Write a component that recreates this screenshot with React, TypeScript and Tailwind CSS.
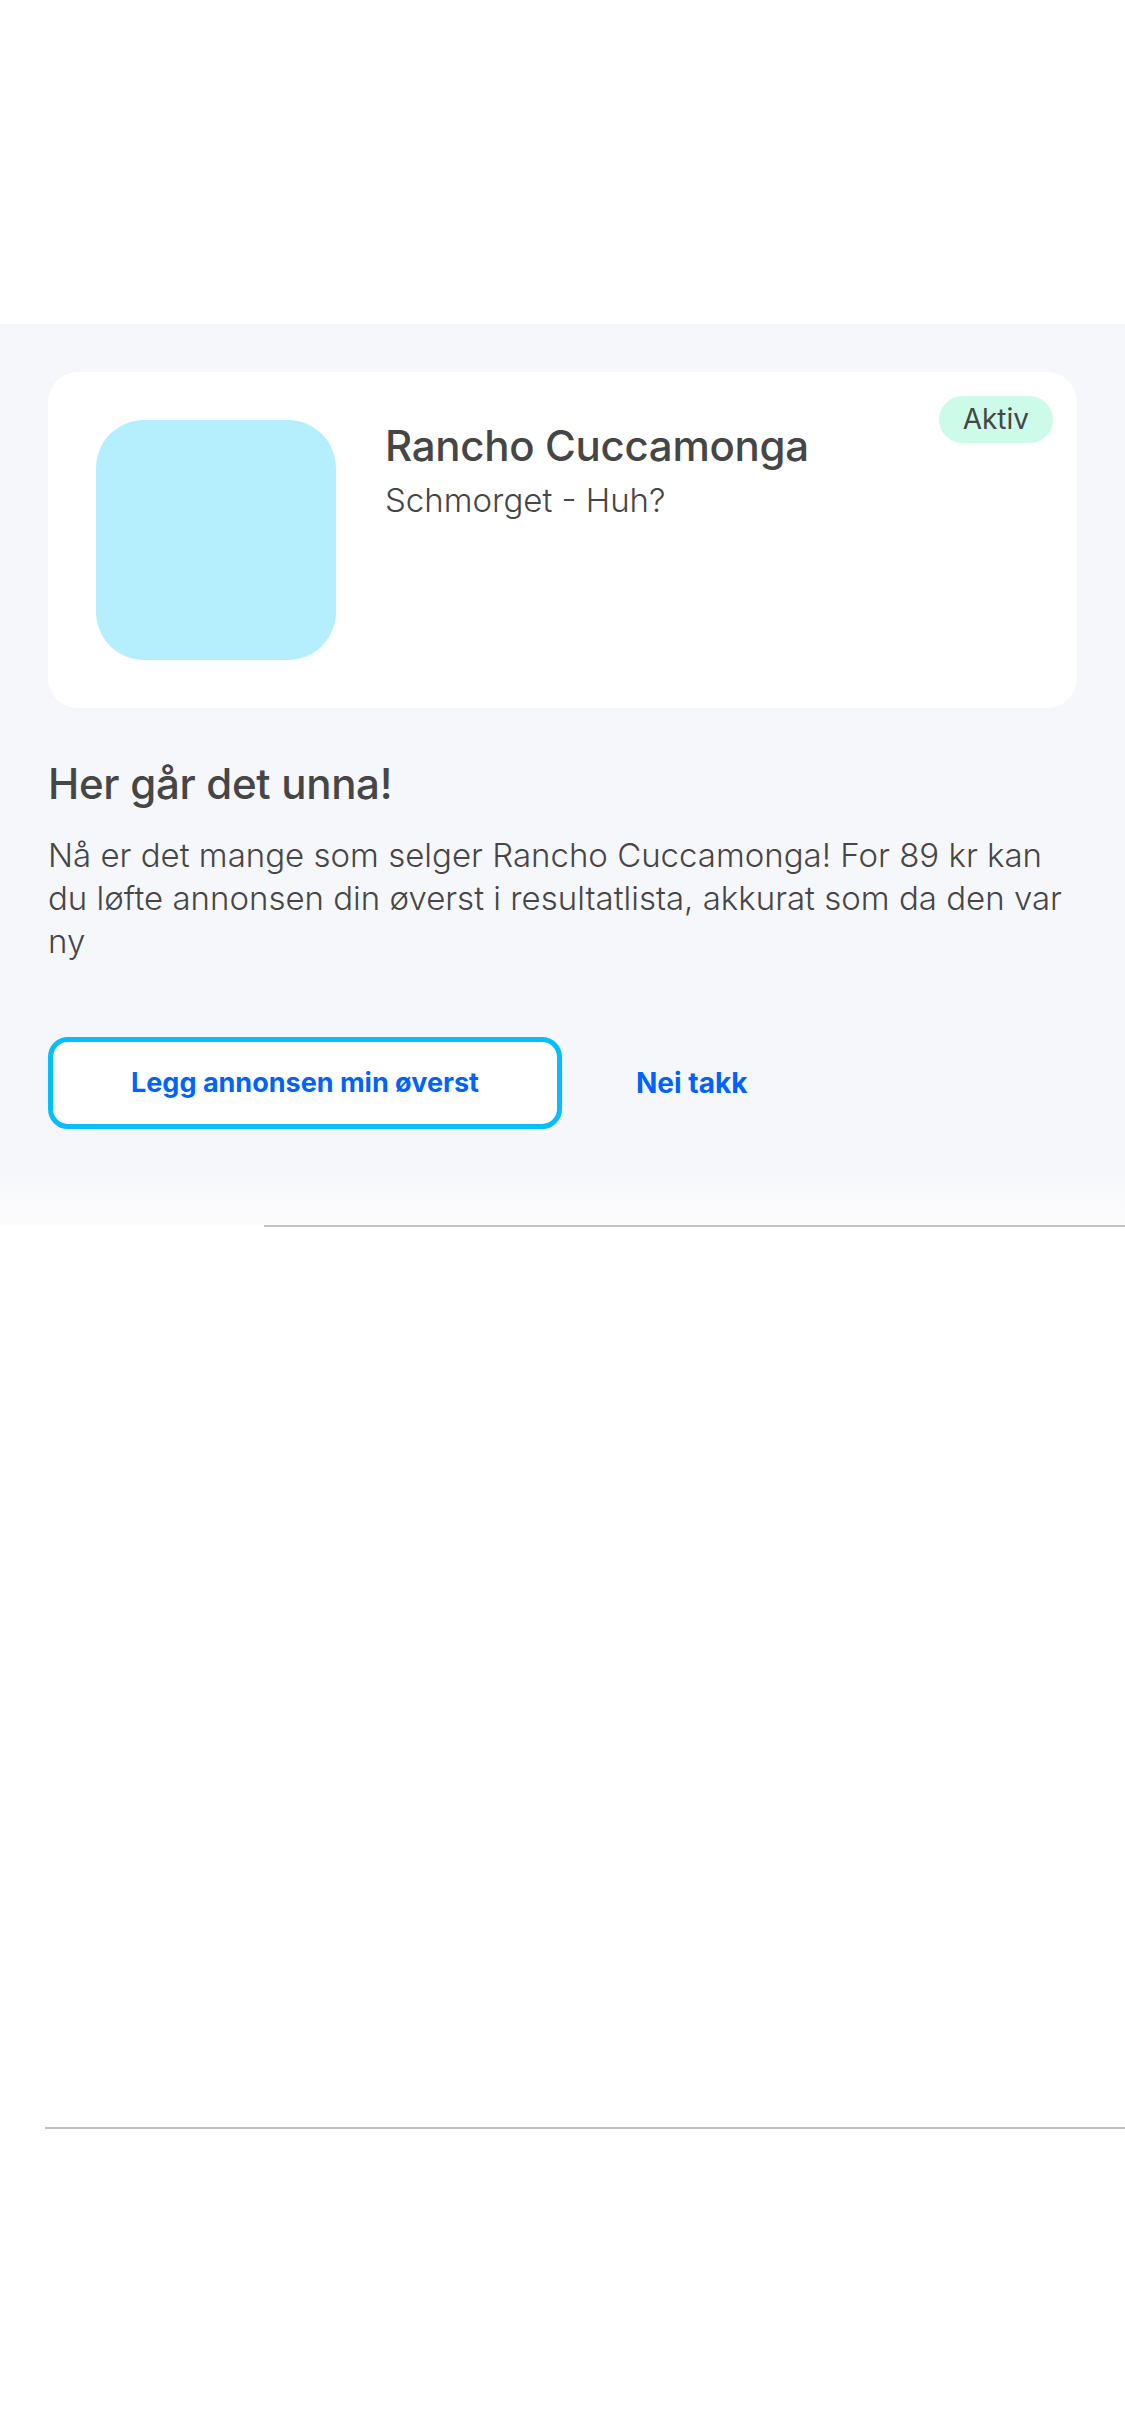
export default function App() {
  return (
    <div className="min-h-[2436px] w-full bg-white font-['Inter',sans-serif] text-[#464646]">
      <div className="h-[324px] bg-white" />

      <section className="bg-[#f6f7fa] px-12 pt-12 pb-[40px]">
        <div className="relative flex gap-[49px] rounded-[30px] bg-white p-12">
          <div className="h-[240px] w-[240px] shrink-0 rounded-[48px] bg-[#b5effd]" />
          <div className="-mt-[4px]">
            <h2 className="text-[42px] leading-[60px] font-medium tracking-[-0.3px]">Rancho Cuccamonga</h2>
            <p className="mt-[2px] text-[33px] leading-[44px] font-light">Schmorget - Huh?</p>
          </div>
          <span className="absolute top-6 right-6 rounded-full bg-[#ccfbea] px-[24px] py-[5px] text-[28px] leading-[37px] font-normal">
            Aktiv
          </span>
        </div>

        <h1 className="mt-[48px] text-[42px] leading-[56px] font-medium tracking-[-0.3px]">Her går det unna!</h1>
        <p className="mt-[22px] text-[33px] leading-[43px] font-light">
          Nå er det mange som selger Rancho Cuccamonga! For 89 kr kan du løfte annonsen din øverst i resultatlista, akkurat som da den var ny
        </p>

        <div className="mt-[74px] flex items-center">
          <button className="h-[92px] w-[514px] rounded-[20px] border-[5px] border-[#06befb] bg-white text-[27px] font-bold text-[#0063fb]">
            Legg annonsen min øverst
          </button>
          <button className="ml-[74px] text-[28px] font-bold text-[#0063fb]">Nei takk</button>
        </div>
      </section>

      <div className="h-[56px] bg-gradient-to-b from-[#f6f7fa] to-[#fcfcfd]" />
      <div className="ml-[264px] h-[2px] bg-[#c2c2c2]" />

      <div className="h-[900px]" />
      <div className="ml-[45px] h-[2px] bg-[#c2c2c2]" />
    </div>
  );
}
